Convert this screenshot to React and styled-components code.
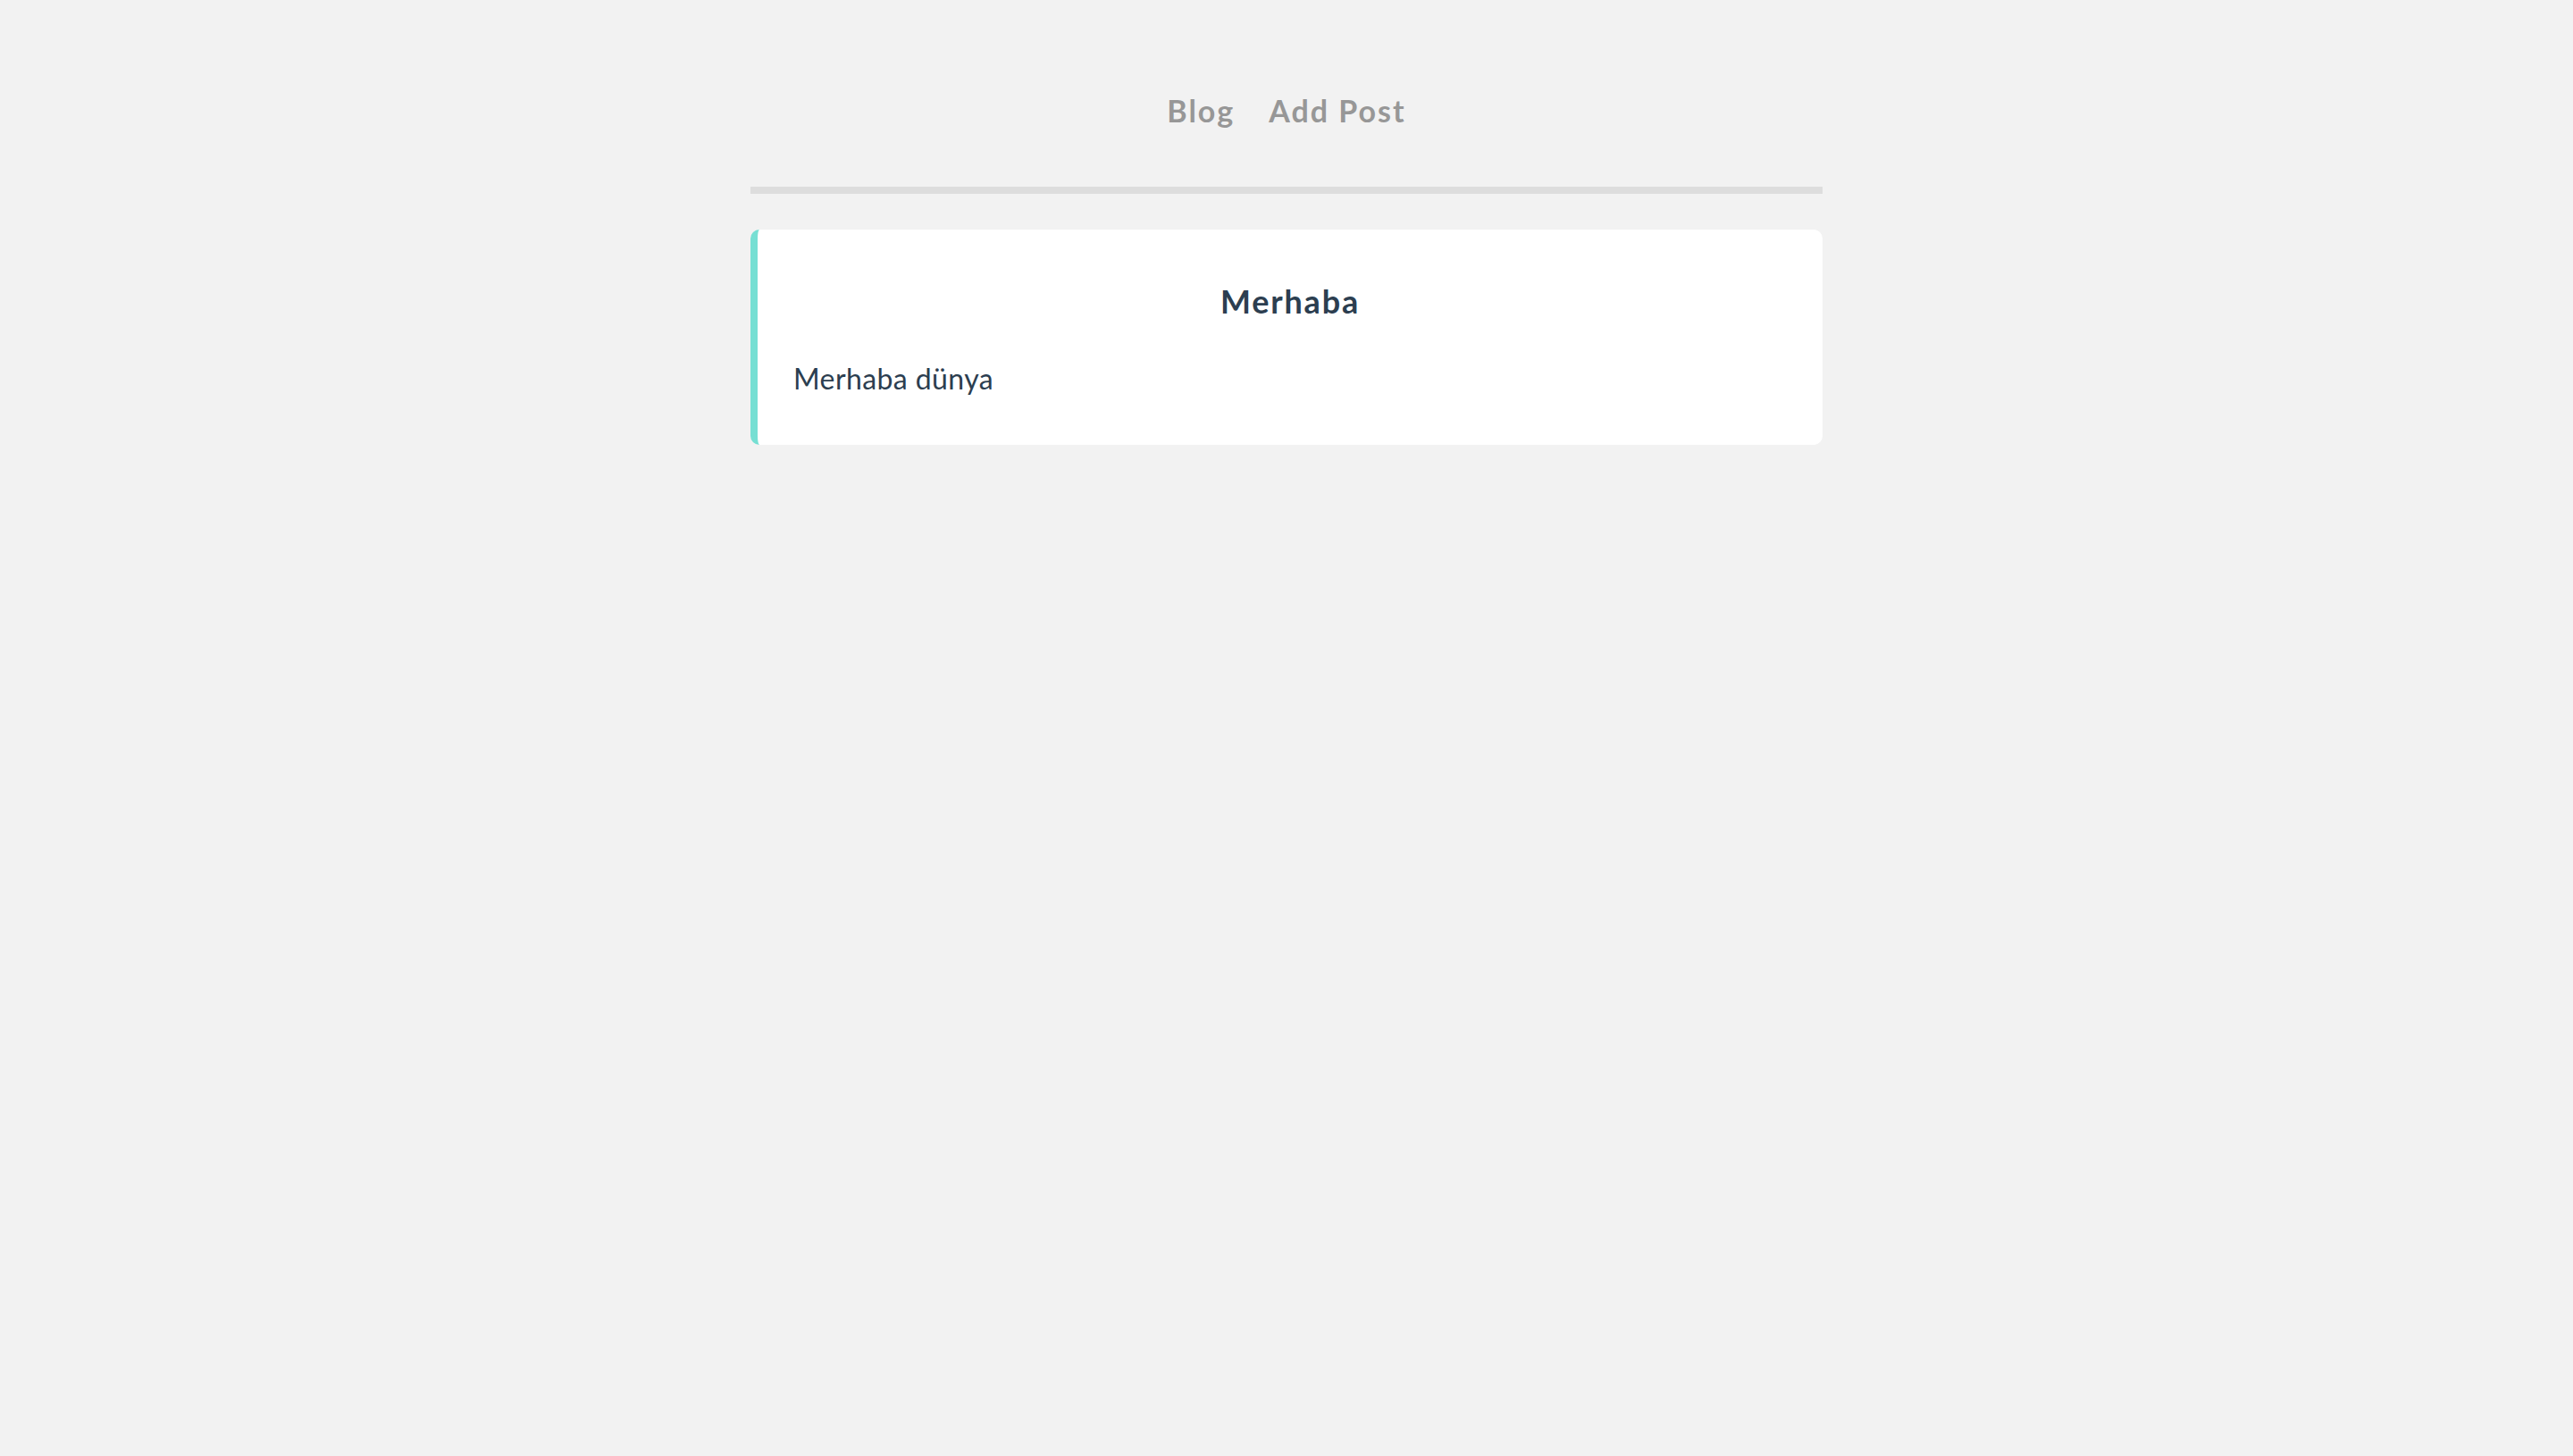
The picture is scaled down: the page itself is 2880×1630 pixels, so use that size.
import React from "react";
import styled, { createGlobalStyle } from "styled-components";

const GlobalStyle = createGlobalStyle`
  html, body {
    margin: 0;
    padding: 0;
    background: #f2f2f2;
  }
  body {
    font-family: Lato, "Noto Sans", "Liberation Sans", sans-serif;
    color: #2c3e50;
    -webkit-font-smoothing: antialiased;
  }
`;

const posts = [{ id: 1, title: "Merhaba", body: "Merhaba dünya" }];

export default function App() {
  return (
    <>
      <GlobalStyle />
      <Page>
        <Nav>
          <NavLink href="#">Blog</NavLink>
          <NavLink href="#">Add Post</NavLink>
        </Nav>
        <PostList>
          {posts.map((post) => (
            <PostCard key={post.id}>
              <PostTitle>{post.title}</PostTitle>
              <PostBody>{post.body}</PostBody>
            </PostCard>
          ))}
        </PostList>
      </Page>
    </>
  );
}

const Page = styled.div`
  width: 1200px;
  margin: 0 auto;
  padding-bottom: 40px;
`;

const Nav = styled.nav`
  display: flex;
  justify-content: center;
  gap: 38px;
  padding: 104px 0 65px;
  border-bottom: 8px solid #dddddd;
`;

const NavLink = styled.a`
  font-size: 34px;
  line-height: 40px;
  font-weight: 700;
  letter-spacing: 2px;
  color: #979797;
  text-decoration: none;
`;

const PostList = styled.div`
  display: flex;
  flex-direction: column;
  gap: 30px;
  margin-top: 40px;
`;

const PostCard = styled.article`
  display: flex;
  flex-direction: column;
  gap: 46px;
  padding: 58px 40px 55px;
  background: #ffffff;
  border-left: 8px solid #76dfd3;
  border-radius: 10px;
`;

const PostTitle = styled.h3`
  margin: 0;
  font-size: 36px;
  line-height: 44px;
  font-weight: 700;
  letter-spacing: 1.8px;
  text-align: center;
  color: #2c3e50;
`;

const PostBody = styled.p`
  margin: 0;
  font-size: 32px;
  line-height: 38px;
  font-weight: 400;
  letter-spacing: 0.4px;
  color: #2c3e50;
`;
